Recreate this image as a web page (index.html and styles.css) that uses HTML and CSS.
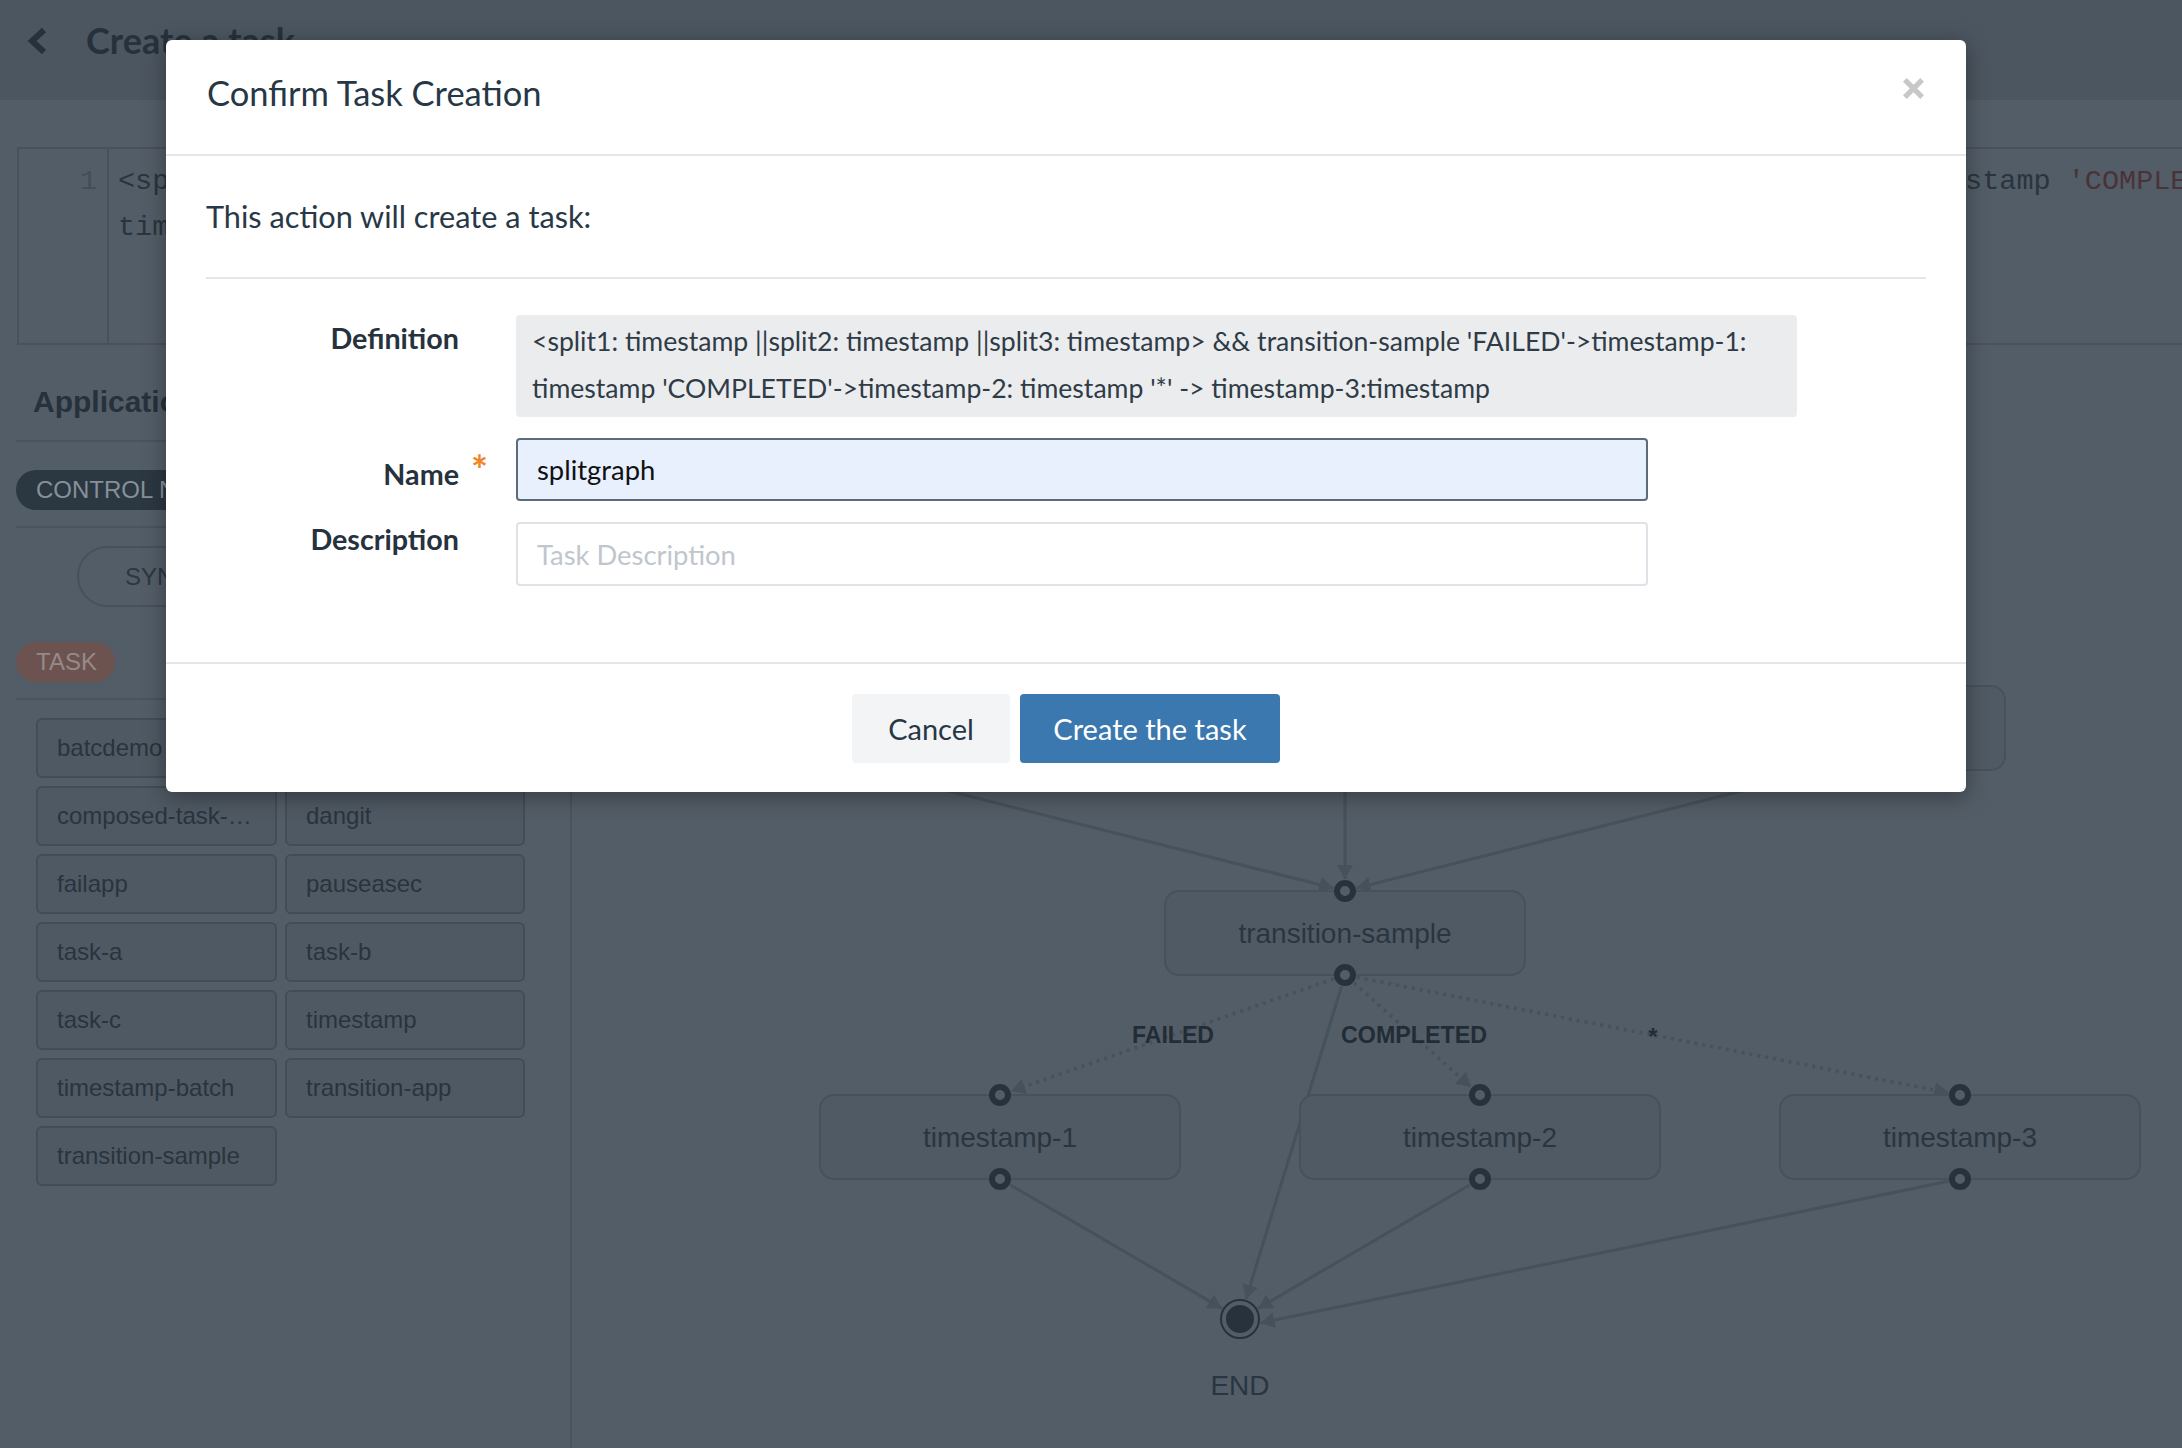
FILE: index.html
```html
<!DOCTYPE html>
<html lang="en">
<head>
<meta charset="utf-8">
<title>Create a task</title>
<link rel="stylesheet" href="styles.css">
</head>
<body>
<div class="page">
  <header class="topbar">
    <svg class="back" viewBox="0 0 22 28" aria-hidden="true"><polyline points="18,3 6,14 18,25" fill="none" stroke="#26313b" stroke-width="6"/></svg>
    <h1 class="page-title">Create a task</h1>
  </header>

  <div class="editor">
    <div class="gutter"><div class="lineno">1</div></div>
    <div class="code">
      <div class="cm-line">&lt;split1: timestamp ||split2: timestamp ||split3: timestamp&gt; &amp;&amp; transition-sample <span class="str">'FAILED'</span>-&gt;timestamp-1: timestamp <span class="str">'COMPLETED'</span>-&gt;timestamp-2: </div>
      <div class="cm-line">timestamp <span class="str">'*'</span> -&gt; timestamp-3:timestamp</div>
    </div>
  </div>

  <div class="workspace">
    <aside class="palette">
      <h3 class="palette-title">Applications</h3>
      <div class="rule rule-a"></div>
      <div class="pill pill-control">CONTROL NODES</div>
      <div class="rule rule-b"></div>
      <div class="pill pill-sync">SYNC</div>
      <div class="pill pill-task">TASK</div>
      <div class="rule rule-b"></div>
      <div class="task-grid">
        <div class="task">batcdemo</div>
        <div class="task">composed-task-runner</div>
        <div class="task">composed-task-runner</div>
        <div class="task">dangit</div>
        <div class="task">failapp</div>
        <div class="task">pauseasec</div>
        <div class="task">task-a</div>
        <div class="task">task-b</div>
        <div class="task">task-c</div>
        <div class="task">timestamp</div>
        <div class="task">timestamp-batch</div>
        <div class="task">transition-app</div>
        <div class="task">transition-sample</div>
      </div>
    </aside>

    <section class="canvas">
      <svg class="graph" viewBox="572 360 1610 1088" width="1610" height="1088">
        <defs>
          <marker id="arr" viewBox="0 0 14 16" refX="14" refY="8" markerWidth="14" markerHeight="16" markerUnits="userSpaceOnUse" orient="auto">
            <path d="M0,0 L14,8 L0,16 z" fill="#47515b"/>
          </marker>
        </defs>
        <g class="links" stroke="#47515b" stroke-width="3" fill="none">
          <line x1="876.6" y1="772.9" x2="1333.4" y2="888.1" marker-end="url(#arr)"/>
          <line x1="1345" y1="782" x2="1345" y2="879" marker-end="url(#arr)"/>
          <line x1="1813.4" y1="772.9" x2="1356.6" y2="888.1" marker-end="url(#arr)"/>
          <line x1="1341.5" y1="986.5" x2="1246.1" y2="1298.9" marker-end="url(#arr)"/>
          <line x1="1010.4" y1="1185" x2="1221.9" y2="1308.4" marker-end="url(#arr)"/>
          <line x1="1469.6" y1="1185" x2="1258.1" y2="1308.4" marker-end="url(#arr)"/>
          <line x1="1948.2" y1="1181.3" x2="1260.6" y2="1323" marker-end="url(#arr)"/>
        </g>
        <g class="links dotted" stroke="#47515b" stroke-width="3.5" stroke-dasharray="3 5" fill="none">
          <line x1="1333.7" y1="978.9" x2="1011.3" y2="1091.1" marker-end="url(#arr)"/>
          <line x1="1354" y1="983" x2="1471" y2="1087" marker-end="url(#arr)"/>
          <line x1="1356.8" y1="977.3" x2="1948.2" y2="1092.7" marker-end="url(#arr)"/>
        </g>
        <g class="nodes" fill="#505a64" stroke="#47515b" stroke-width="2">
          <rect x="685" y="686" width="360" height="84" rx="14"/>
          <rect x="1165" y="686" width="360" height="84" rx="14"/>
          <rect x="1645" y="686" width="360" height="84" rx="14"/>
          <rect x="1165" y="891" width="360" height="84" rx="14"/>
          <rect x="820" y="1095" width="360" height="84" rx="14"/>
          <rect x="1300" y="1095" width="360" height="84" rx="14"/>
          <rect x="1780" y="1095" width="360" height="84" rx="14"/>
        </g>
        <g class="node-labels" fill="#2a3540" font-family="Liberation Sans, Arial, sans-serif" font-size="28" text-anchor="middle">
          <text x="865" y="738">timestamp</text>
          <text x="1345" y="738">timestamp</text>
          <text x="1825" y="738">timestamp</text>
          <text x="1345" y="943">transition-sample</text>
          <text x="1000" y="1147">timestamp-1</text>
          <text x="1480" y="1147">timestamp-2</text>
          <text x="1960" y="1147">timestamp-3</text>
          <text x="1240" y="1395">END</text>
        </g>
        <g class="link-labels" fill="#222c35" font-family="Liberation Sans, Arial, sans-serif" font-size="24" font-weight="700" text-anchor="middle">
          <text x="1173" y="1043" textLength="82" lengthAdjust="spacingAndGlyphs">FAILED</text>
          <text x="1414" y="1043" textLength="146" lengthAdjust="spacingAndGlyphs">COMPLETED</text>
          <text x="1653" y="1045">*</text>
        </g>
        <g class="ports" fill="#535d67" stroke="#27323c" stroke-width="6">
          <circle cx="865" cy="686" r="8"/><circle cx="865" cy="770" r="8"/>
          <circle cx="1345" cy="686" r="8"/><circle cx="1345" cy="770" r="8"/>
          <circle cx="1825" cy="686" r="8"/><circle cx="1825" cy="770" r="8"/>
          <circle cx="1345" cy="891" r="8"/><circle cx="1345" cy="975" r="8"/>
          <circle cx="1000" cy="1095" r="8"/><circle cx="1000" cy="1179" r="8"/>
          <circle cx="1480" cy="1095" r="8"/><circle cx="1480" cy="1179" r="8"/>
          <circle cx="1960" cy="1095" r="8"/><circle cx="1960" cy="1179" r="8"/>
        </g>
        <g class="end-node">
          <circle cx="1240" cy="1319" r="19" fill="none" stroke="#27323c" stroke-width="2"/>
          <circle cx="1240" cy="1319" r="14" fill="#27323c"/>
        </g>
      </svg>
    </section>
  </div>
</div>

<div class="modal" role="dialog" aria-labelledby="modal-title">
  <div class="modal-header">
    <h2 class="modal-title" id="modal-title">Confirm Task Creation</h2>
    <button class="close" aria-label="Close">
      <svg viewBox="0 0 24 24" width="23" height="23"><path d="M3 3 L21 21 M21 3 L3 21" stroke="#c8c8c8" stroke-width="5.5" fill="none"/></svg>
    </button>
  </div>
  <div class="modal-body">
    <p class="intro">This action will create a task:</p>
    <hr class="sep">
    <div class="form">
      <label class="lbl lbl-def">Definition</label>
      <div class="def-box">&lt;split1: timestamp ||split2: timestamp ||split3: timestamp&gt; &amp;&amp; transition-sample 'FAILED'-&gt;timestamp-1: timestamp 'COMPLETED'-&gt;timestamp-2: timestamp '*' -&gt; timestamp-3:timestamp</div>
      <label class="lbl lbl-name" for="task-name">Name<span class="req">*</span></label>
      <input class="field field-name" id="task-name" type="text" value="splitgraph">
      <label class="lbl lbl-desc" for="task-desc">Description</label>
      <input class="field field-desc" id="task-desc" type="text" placeholder="Task Description">
    </div>
  </div>
  <div class="modal-footer">
    <button class="btn btn-cancel">Cancel</button>
    <button class="btn btn-primary">Create the task</button>
  </div>
</div>
</body>
</html>
```

FILE: styles.css
```css
* { box-sizing: border-box; }

html, body { margin: 0; padding: 0; }

body {
  width: 2182px;
  height: 1448px;
  overflow: hidden;
  position: relative;
  background: #535d67;
  font-family: "Liberation Sans", Arial, sans-serif;
}

.page {
  height: 100%;
  display: flex;
  flex-direction: column;
}

/* ---------- top bar ---------- */
.topbar {
  flex: none;
  height: 100px;
  display: flex;
  align-items: flex-start;
  padding: 18px 0 0 26px;
  background: #4c5660;
}

.back {
  flex: none;
  width: 22px;
  height: 28px;
  margin-top: 9px;
}

.page-title {
  margin: 0 0 0 38px;
  font-family: Lato, "Open Sans", sans-serif;
  font-weight: 700;
  font-size: 36px;
  line-height: 44px;
  color: #26313b;
}

/* ---------- editor ---------- */
.editor {
  flex: none;
  display: flex;
  height: 198px;
  margin: 47px -400px 0 17px;
  border: 2px solid #48525c;
}

.gutter {
  flex: none;
  width: 90px;
  border-right: 2px solid #48525c;
  padding-top: 10px;
}

.lineno {
  font-family: "Liberation Mono", monospace;
  font-size: 28.5px;
  line-height: 46px;
  color: #444e58;
  text-align: right;
  padding-right: 10px;
}

.code {
  flex: 1;
  overflow: hidden;
  padding: 10px 0 0 9px;
  font-family: "Liberation Mono", monospace;
  font-size: 28.5px;
  line-height: 46px;
  color: #2a343d;
}

.cm-line { white-space: pre; }

.str { color: #4a3338; }

/* ---------- workspace ---------- */
.workspace {
  flex: 1;
  min-height: 0;
  display: flex;
  margin-top: 15px;
}

.palette {
  flex: none;
  width: 572px;
  border-right: 2px solid #4a545e;
  padding: 24px 16px 0 16px;
  display: flex;
  flex-direction: column;
  align-items: flex-start;
}

.palette-title {
  margin: 0;
  padding-left: 17px;
  font-size: 30px;
  line-height: 36px;
  font-weight: 700;
  color: #26313b;
}

.rule {
  flex: none;
  align-self: stretch;
  height: 2px;
  background: #4a545e;
}
.rule-a { margin-top: 20px; }
.rule-b { margin-top: 16px; }

.pill {
  flex: none;
  font-size: 24px;
  white-space: nowrap;
}

.pill-control {
  margin-top: 28px;
  height: 40px;
  line-height: 40px;
  padding: 0 26px 0 20px;
  border-radius: 20px;
  background: #2b3741;
  color: #86909a;
}

.pill-sync {
  margin: 18px 0 0 61px;
  height: 61px;
  line-height: 57px;
  padding: 0 120px 0 46px;
  border: 2px solid #47515b;
  border-radius: 31px;
  color: #2c3741;
}

.pill-task {
  margin-top: 35px;
  height: 40px;
  line-height: 40px;
  padding: 0 18px 0 20px;
  border-radius: 20px;
  background: #6c5350;
  color: #958a8a;
}

.task-grid {
  margin: 18px 0 0 20px;
  display: grid;
  grid-template-columns: 241px 240px;
  gap: 8px;
}

.task {
  height: 60px;
  line-height: 56px;
  border: 2px solid #434d57;
  border-radius: 6px;
  background: #4f5963;
  padding: 0 16px 0 19px;
  font-size: 24px;
  color: #29343e;
  white-space: nowrap;
  overflow: hidden;
  text-overflow: ellipsis;
}

/* ---------- graph ---------- */
.canvas {
  flex: 1;
  position: relative;
  overflow: hidden;
}

.graph {
  position: absolute;
  left: 0;
  top: 0;
  display: block;
}

/* ---------- modal ---------- */
.modal {
  position: absolute;
  left: 166px;
  top: 40px;
  width: 1800px;
  background: #fff;
  border-radius: 6px;
  box-shadow: 0 5px 22px rgba(0, 0, 0, 0.35);
  font-family: Lato, "Open Sans", sans-serif;
  color: #263746;
}

.modal-header {
  height: 116px;
  border-bottom: 2px solid #e4e7ea;
  display: flex;
  justify-content: space-between;
  align-items: center;
  padding: 0 41px;
}

.modal-title {
  margin: 0 0 8px 0;
  font-weight: 400;
  font-size: 34.5px;
  line-height: 40px;
}

.close {
  align-self: flex-start;
  margin-top: 37px;
  width: 23px;
  height: 23px;
  padding: 0;
  border: 0;
  background: none;
  line-height: 0;
}

.modal-body {
  padding: 41px 40px 76px;
}

.intro {
  margin: 0;
  font-size: 30.7px;
  line-height: 40px;
  color: #283846;
}

.sep {
  margin: 40px 0 36px;
  border: 0;
  height: 2px;
  background: #e4e7ea;
}

.form {
  display: grid;
  grid-template-columns: 253px auto;
  column-gap: 57px;
  row-gap: 21px;
  align-items: start;
  justify-items: start;
}

.lbl {
  justify-self: end;
  position: relative;
  font-weight: 700;
  font-size: 28.7px;
  line-height: 34px;
  color: #26323d;
}
.lbl-def { padding-top: 6px; }
.lbl-name { padding-top: 19px; }
.lbl-desc { padding-top: 0; }

.req {
  position: absolute;
  left: calc(100% + 12px);
  top: 18px;
  font-size: 40px;
  line-height: 28px;
  font-weight: 700;
  color: #f0862a;
}

.def-box {
  width: 1281px;
  background: #ebecee;
  border-radius: 4px;
  padding: 3px 16px 5px;
  font-size: 26.6px;
  line-height: 47px;
  color: #2f3b46;
}

.field {
  width: 1132px;
  height: 63px;
  border-radius: 4px;
  padding: 0 19px;
  font-family: inherit;
  font-size: 27.4px;
  color: #111;
  outline: none;
}
.field-name {
  background: #e8f0fe;
  border: 2px solid #5d6c79;
}
.field-desc {
  height: 64px;
  background: #fff;
  border: 2px solid #dfe3e7;
}
.field::placeholder { color: #bfc6cd; }

.modal-footer {
  border-top: 2px solid #e4e7ea;
  padding: 30px 0 29px;
  display: flex;
  justify-content: center;
  gap: 10px;
}

.btn {
  height: 69px;
  border: 0;
  border-radius: 4px;
  font-family: inherit;
  font-size: 29px;
  padding: 0;
}
.btn-cancel {
  width: 158px;
  background: #f3f4f6;
  color: #263746;
}
.btn-primary {
  width: 260px;
  background: #3b78af;
  color: #fff;
}
```
